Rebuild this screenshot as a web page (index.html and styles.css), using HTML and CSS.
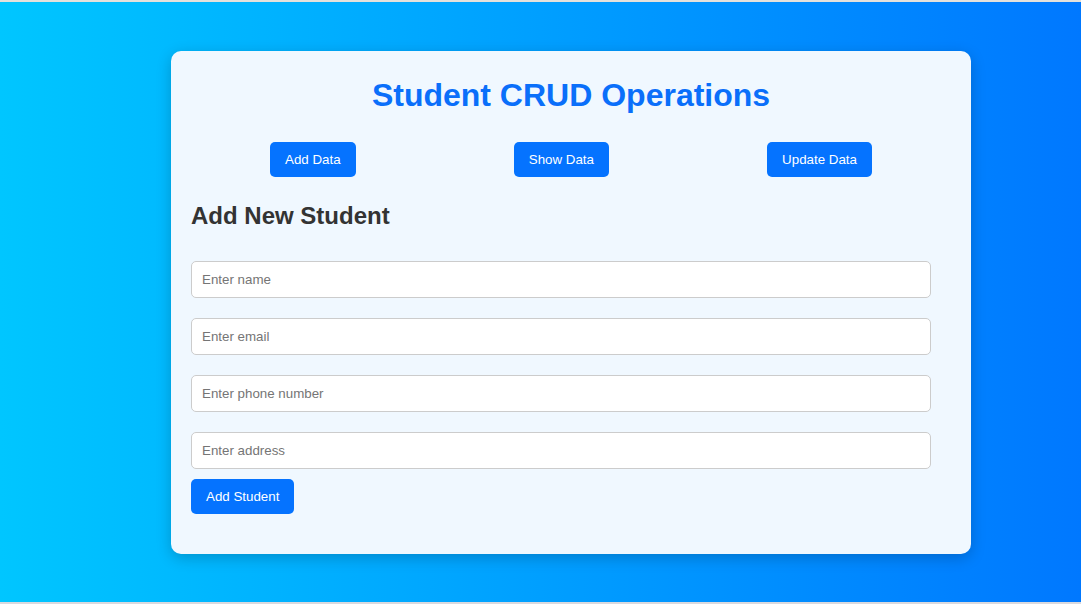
FILE: index.html
```html
<!DOCTYPE html>
<html lang="en">
<head>
<meta charset="utf-8">
<title>Student CRUD Operations</title>
<link rel="stylesheet" href="styles.css">
</head>
<body>
<div class="page">
  <div class="card">
    <h1 class="title">Student CRUD Operations</h1>
    <div class="nav">
      <button class="btn">Add Data</button>
      <button class="btn">Show Data</button>
      <button class="btn">Update Data</button>
    </div>
    <h2 class="subtitle">Add New Student</h2>
    <form class="form">
      <input class="field" type="text" placeholder="Enter name">
      <input class="field" type="email" placeholder="Enter email">
      <input class="field" type="text" placeholder="Enter phone number">
      <input class="field" type="text" placeholder="Enter address">
      <button class="btn submit" type="button">Add Student</button>
    </form>
  </div>
</div>
</body>
</html>
```
FILE: styles.css
```css
* { box-sizing: border-box; }
html, body { margin: 0; padding: 0; }
body {
  font-family: "Liberation Sans", Arial, sans-serif;
}
.page {
  height: 604px;
  border-top: 2px solid #e4e1dc;
  border-bottom: 2px solid #d9d9de;
  background: linear-gradient(to right, #00c6ff, #0078ff);
  display: flex;
  align-items: center;
  padding-left: 171px;
}
.card {
  width: 800px;
  background: #f0f8ff;
  border-radius: 10px;
  padding: 20px;
  box-shadow: 0 4px 15px rgba(0, 0, 0, 0.2);
}
.title {
  margin: 0 0 28px;
  padding-top: 6px;
  text-align: center;
  color: #0a6ffa;
  font-size: 32px;
  font-weight: bold;
}
.nav {
  display: flex;
  justify-content: space-around;
}
.btn {
  font-family: "Liberation Sans", Arial, sans-serif;
  font-size: 13.333px;
  color: #fff;
  background: #0573ff;
  border: none;
  border-radius: 5px;
  padding: 10px 15px;
  cursor: pointer;
}
.subtitle {
  margin: 25px 0 31px;
  color: #333;
  font-size: 24px;
  font-weight: bold;
}
.form {
  display: flex;
  flex-direction: column;
  align-items: flex-start;
  margin-bottom: 20px;
}
.field {
  width: 740px;
  padding: 10px;
  margin-bottom: 20px;
  border: 1px solid #ccc;
  border-radius: 5px;
  font-family: "Liberation Sans", Arial, sans-serif;
  font-size: 13.333px;
  background: #fff;
}
.field:last-of-type { margin-bottom: 10px; }
.field::placeholder { color: #757575; }
```
